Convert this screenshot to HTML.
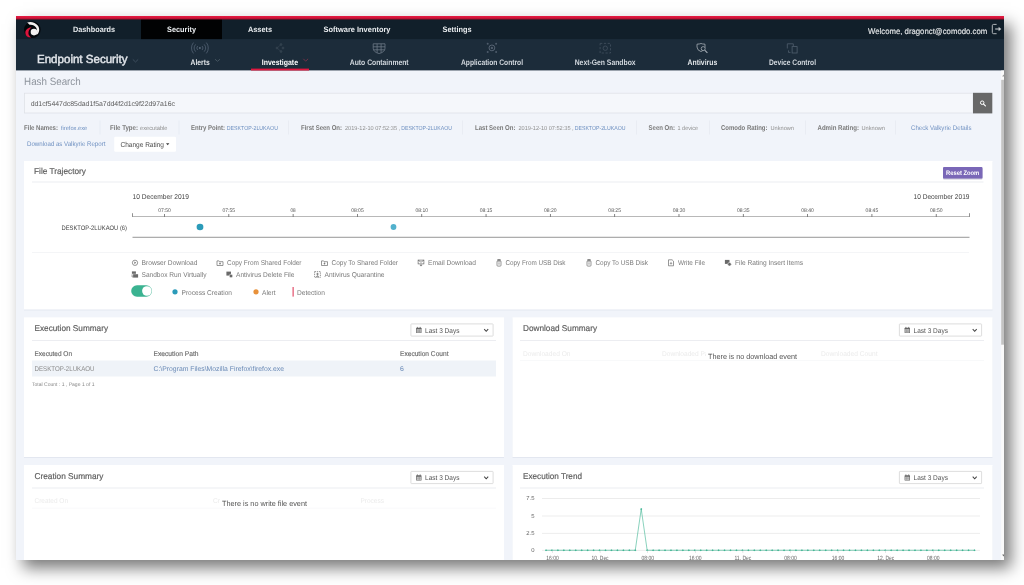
<!DOCTYPE html>
<html lang="en"><head><meta charset="utf-8"><title>Endpoint Security - Hash Search</title>
<style>
html,body{margin:0;padding:0;background:#fff;}
body{width:1024px;height:585px;overflow:hidden;position:relative;font-family:"Liberation Sans",sans-serif;}
#frame{position:absolute;left:16px;top:16px;width:988px;height:544px;overflow:hidden;background:#f1f4fa;box-shadow:7px 8px 15px rgba(0,0,0,.53);}
#ui{position:absolute;left:-16px;top:-16px;font-family:"Liberation Sans",sans-serif;text-rendering:geometricPrecision;will-change:transform;}
#ui text{white-space:pre;}
</style></head>
<body>
<div id="frame">
<svg id="ui" width="1024" height="585" viewBox="0 0 1024 585">
<defs><linearGradient id="rg" x1="0" y1="0" x2="0" y2="1"><stop offset="0" stop-color="#e81c42"/><stop offset="0.55" stop-color="#d2153b"/><stop offset="1" stop-color="#980e2a"/></linearGradient></defs>
<rect x="16.00" y="16.00" width="989.00" height="54.40" fill="#1c2c3a"/>
<rect x="16.00" y="16.00" width="989.00" height="23.10" fill="#111f2a"/>
<rect x="141.00" y="16.00" width="81.00" height="23.10" fill="#010203"/>
<rect x="16.00" y="15.90" width="989.00" height="3.60" fill="url(#rg)"/>
<circle cx="32.3" cy="29.8" r="8.3" fill="#03060a"/><path d="M27.2 22.4 C30.5 21.2 35.5 22 38 25.8 C40.2 29.4 39.2 33.4 36.4 35.1 C37.4 32.6 37.4 30 36.2 27.8 C34.8 25.4 32 24.3 29.6 24.8 Z" fill="#f3f0f0"/><circle cx="34" cy="32.1" r="3.3" fill="#f3f0f0"/><path d="M31.6 27.6 C28 27.4 25 30 25.4 33.4 C25.8 36 28.4 37.8 31 37.4 C28.8 36 28 33.8 28.6 31.6 C29 29.8 30.2 28.4 31.6 27.6 Z" fill="#d9143c"/>
<text y="32" font-size="7.8" fill="#e9ecef" font-weight="700" x="73.00" textLength="42.00" lengthAdjust="spacingAndGlyphs">Dashboards</text>
<text y="32" font-size="7.8" fill="#e9ecef" font-weight="700" x="167.00" textLength="29.00" lengthAdjust="spacingAndGlyphs">Security</text>
<text y="32" font-size="7.8" fill="#e9ecef" font-weight="700" x="248.00" textLength="24.00" lengthAdjust="spacingAndGlyphs">Assets</text>
<text y="32" font-size="7.8" fill="#e9ecef" font-weight="700" x="323.50" textLength="67.00" lengthAdjust="spacingAndGlyphs">Software Inventory</text>
<text y="32" font-size="7.8" fill="#e9ecef" font-weight="700" x="442.50" textLength="29.00" lengthAdjust="spacingAndGlyphs">Settings</text>
<text y="34" font-size="8.2" fill="#e6e8ea" stroke="#e6e8ea" stroke-width="0.12" x="868.00" textLength="119.20" lengthAdjust="spacingAndGlyphs">Welcome, dragonct@comodo.com</text>
<g transform="translate(991.00 23.50)"><path d="M5.6 0.9 H2.6 Q1.3 0.9 1.3 2.2 V8.9 Q1.3 10.2 2.6 10.2 H5.6" fill="none" stroke="#c3c7cb" stroke-width="0.9"/><path d="M4.2 5.5 H8.2" stroke="#c3c7cb" stroke-width="1.1" fill="none"/><path d="M7.6 3.2 L10.3 5.5 L7.6 7.8 Z" fill="#c3c7cb"/></g>
<text y="63" font-size="11.7" fill="#e1e5ea" stroke="#e1e5ea" stroke-width="0.45" x="37.00" textLength="90.50" lengthAdjust="spacingAndGlyphs">Endpoint Security</text>
<g transform="translate(132.00 58.40)"><path d="M0.8 1 L3.5 3.6 L6.2 1" fill="none" stroke="#415161" stroke-width="0.9"/></g>
<text y="65" font-size="8.0" fill="#e3e7ea" font-weight="700" x="190.60" textLength="19.10" lengthAdjust="spacingAndGlyphs">Alerts</text>
<text y="65" font-size="8.0" fill="#ffffff" font-weight="700" x="261.75" textLength="36.25" lengthAdjust="spacingAndGlyphs">Investigate</text>
<text y="65" font-size="8.0" fill="#d3d9df" font-weight="700" x="349.80" textLength="58.80" lengthAdjust="spacingAndGlyphs">Auto Containment</text>
<text y="65" font-size="8.0" fill="#d3d9df" font-weight="700" x="461.00" textLength="62.00" lengthAdjust="spacingAndGlyphs">Application Control</text>
<text y="65" font-size="8.0" fill="#d3d9df" font-weight="700" x="574.70" textLength="60.90" lengthAdjust="spacingAndGlyphs">Next-Gen Sandbox</text>
<text y="65" font-size="8.0" fill="#e3e7ea" font-weight="700" x="687.60" textLength="29.60" lengthAdjust="spacingAndGlyphs">Antivirus</text>
<text y="65" font-size="8.0" fill="#d3d9df" font-weight="700" x="769.00" textLength="47.00" lengthAdjust="spacingAndGlyphs">Device Control</text>
<g transform="translate(214.60 58.80)"><path d="M0.4 0.4 L2.9 2.5 L5.4 0.4" fill="none" stroke="#44545f" stroke-width="1"/></g>
<g transform="translate(302.50 58.00)"><path d="M0.8 0.8 L3.2 3.2 L5.6 0.8" fill="none" stroke="#7c3149" stroke-width="0.9"/></g>
<rect x="251.00" y="68.60" width="58.00" height="1.90" fill="#e2173f"/>
<g fill="none" stroke="#4f5f70" stroke-width="0.85"><circle cx="199.9" cy="48.0" r="1" fill="#5a6a7a" stroke="none"/><path d="M202.13 45.99 A3.0 3.0 0 0 1 202.13 50.01"/><path d="M197.67 45.99 A3.0 3.0 0 0 0 197.67 50.01"/><path d="M204.19 44.40 A5.6 5.6 0 0 1 204.19 51.60"/><path d="M195.61 44.40 A5.6 5.6 0 0 0 195.61 51.60"/><path d="M206.33 42.60 A8.4 8.4 0 0 1 206.33 53.40"/><path d="M193.47 42.60 A8.4 8.4 0 0 0 193.47 53.40"/></g>
<g transform="translate(274.00 43.00)"><g stroke="#33424f" stroke-width="0.7" fill="#33424f"><path d="M7 1.5 L3 5 L7 8.5" fill="none"/><circle cx="7" cy="1.5" r="1"/><circle cx="3" cy="5" r="1"/><circle cx="9" cy="5" r="1"/><circle cx="7" cy="8.5" r="1"/></g></g>
<g transform="translate(372.60 43.20)"><g fill="none" stroke="#6d7a88" stroke-width="0.8"><path d="M0.6 0.6 H12.4 V5 Q12.4 8.8 6.5 10.4 Q0.6 8.8 0.6 5 Z"/><path d="M4.5 0.6 V9.6 M8.5 0.6 V9.6 M0.6 3.6 H12.4 M1 6.6 H12"/></g></g>
<g transform="translate(485.50 41.50)"><g fill="#4e5c6b"><circle cx="6.4" cy="6.4" r="2.9" fill="none" stroke="#5b6978" stroke-width="0.9"/><circle cx="6.4" cy="6.4" r="1.2"/><circle cx="2.2" cy="2.2" r="1"/><circle cx="10.6" cy="2.2" r="1"/><circle cx="2.2" cy="10.6" r="1"/><circle cx="10.6" cy="10.6" r="1"/></g></g>
<g transform="translate(599.50 42.80)"><g fill="none" stroke="#425160" stroke-width="0.8"><rect x="0.6" y="0.6" width="10.4" height="9.6" stroke-dasharray="2.2 1.6"/><circle cx="5.8" cy="5.4" r="2.2"/></g></g>
<g transform="translate(696.00 43.00)"><g fill="none" stroke="#a4acb4" stroke-width="0.8"><path d="M1 1.2 Q3.8 1 5 0.5 Q6.2 1 9 1.2 V4 Q9 7.2 5 8.6 Q1 7.2 1 4 Z"/><circle cx="7.2" cy="5.6" r="2" fill="#1c2c3a"/><path d="M8.7 7.1 L11.4 9.8" stroke-width="1.1"/></g></g>
<g transform="translate(786.50 43.00)"><g fill="none" stroke="#51606f" stroke-width="0.8"><path d="M0.8 5.5 V0.8 H6.8 V3"/><rect x="5.6" y="3.6" width="5" height="6.4"/><path d="M2 7.4 V9.4 H4"/></g></g>
<text y="85" font-size="10.6" fill="#8e949d" x="24.10" textLength="56.60" lengthAdjust="spacingAndGlyphs">Hash Search</text>
<rect x="24.40" y="93.20" width="948.60" height="19.80" fill="#f5f7fb" stroke="#dfe2e8" stroke-width="0.8"/>
<rect x="973.00" y="92.80" width="19.30" height="20.60" fill="#686868"/>
<g transform="translate(979.30 99.80)"><circle cx="2.9" cy="2.9" r="1.75" fill="none" stroke="#fff" stroke-width="1"/><path d="M4.3 4.3 L6.1 6.1" stroke="#fff" stroke-width="1.2" stroke-linecap="round"/></g>
<text y="106" font-size="6.9" fill="#5a5a5a" x="30.70" textLength="144.30" lengthAdjust="spacingAndGlyphs">dd1cf5447dc85dad1f5a7dd4f2d1c9f22d97a16c</text>
<text y="130" font-size="7.0" fill="#7a7a7a" font-weight="700" x="24.00" textLength="34.00" lengthAdjust="spacingAndGlyphs">File Names:</text>
<text y="130" font-size="5.9" fill="#6d8fc0" x="60.90" textLength="26.40" lengthAdjust="spacingAndGlyphs">firefox.exe</text>
<text y="130" font-size="7.0" fill="#7a7a7a" font-weight="700" x="110.00" textLength="28.00" lengthAdjust="spacingAndGlyphs">File Type:</text>
<text y="130" font-size="5.9" fill="#8f8f8f" x="140.00" textLength="27.50" lengthAdjust="spacingAndGlyphs">executable</text>
<text y="130" font-size="7.0" fill="#7a7a7a" font-weight="700" x="191.00" textLength="34.00" lengthAdjust="spacingAndGlyphs">Entry Point:</text>
<text y="130" font-size="5.9" fill="#6d8fc0" x="226.75" textLength="51.25" lengthAdjust="spacingAndGlyphs">DESKTOP-2LUKAOU</text>
<text y="130" font-size="7.0" fill="#7a7a7a" font-weight="700" x="301.00" textLength="41.00" lengthAdjust="spacingAndGlyphs">First Seen On:</text>
<text y="130" font-size="5.9" fill="#8f8f8f" x="345.00" textLength="52.00" lengthAdjust="spacingAndGlyphs">2019-12-10 07:52:35</text>
<text y="130" font-size="5.9" fill="#8f8f8f" x="398.60">,</text>
<text y="130" font-size="5.9" fill="#6d8fc0" x="401.30" textLength="50.70" lengthAdjust="spacingAndGlyphs">DESKTOP-2LUKAOU</text>
<text y="130" font-size="7.0" fill="#7a7a7a" font-weight="700" x="475.00" textLength="40.50" lengthAdjust="spacingAndGlyphs">Last Seen On:</text>
<text y="130" font-size="5.9" fill="#8f8f8f" x="518.50" textLength="52.00" lengthAdjust="spacingAndGlyphs">2019-12-10 07:52:35</text>
<text y="130" font-size="5.9" fill="#8f8f8f" x="572.00">,</text>
<text y="130" font-size="5.9" fill="#6d8fc0" x="574.70" textLength="50.80" lengthAdjust="spacingAndGlyphs">DESKTOP-2LUKAOU</text>
<text y="130" font-size="7.0" fill="#7a7a7a" font-weight="700" x="648.50" textLength="26.50" lengthAdjust="spacingAndGlyphs">Seen On:</text>
<text y="130" font-size="5.9" fill="#8f8f8f" x="677.50" textLength="20.50" lengthAdjust="spacingAndGlyphs">1 device</text>
<text y="130" font-size="7.0" fill="#7a7a7a" font-weight="700" x="721.00" textLength="46.50" lengthAdjust="spacingAndGlyphs">Comodo Rating:</text>
<text y="130" font-size="5.9" fill="#8f8f8f" x="770.50" textLength="23.50" lengthAdjust="spacingAndGlyphs">Unknown</text>
<text y="130" font-size="7.0" fill="#7a7a7a" font-weight="700" x="817.50" textLength="41.50" lengthAdjust="spacingAndGlyphs">Admin Rating:</text>
<text y="130" font-size="5.9" fill="#8f8f8f" x="861.50" textLength="23.50" lengthAdjust="spacingAndGlyphs">Unknown</text>
<text y="130" font-size="6.7" fill="#6d8fc0" x="911.00" textLength="60.50" lengthAdjust="spacingAndGlyphs">Check Valkyrie Details</text>
<rect x="99.60" y="120.50" width="0.80" height="14.00" fill="#e7eaf2"/>
<rect x="178.60" y="120.50" width="0.80" height="14.00" fill="#e7eaf2"/>
<rect x="288.10" y="120.50" width="0.80" height="14.00" fill="#e7eaf2"/>
<rect x="462.10" y="120.50" width="0.80" height="14.00" fill="#e7eaf2"/>
<rect x="636.10" y="120.50" width="0.80" height="14.00" fill="#e7eaf2"/>
<rect x="709.10" y="120.50" width="0.80" height="14.00" fill="#e7eaf2"/>
<rect x="805.10" y="120.50" width="0.80" height="14.00" fill="#e7eaf2"/>
<rect x="895.10" y="120.50" width="0.80" height="14.00" fill="#e7eaf2"/>
<text y="146" font-size="6.7" fill="#6d8fc0" x="27.00" textLength="78.40" lengthAdjust="spacingAndGlyphs">Download as Valkyrie Report</text>
<rect x="114.20" y="136.80" width="61.80" height="14.90" fill="#ffffff" rx="1.2"/>
<text y="147" font-size="7.1" fill="#4a4a4a" x="120.50" textLength="43.50" lengthAdjust="spacingAndGlyphs">Change Rating</text>
<g transform="translate(165.80 143.00)"><path d="M0.2 0.3 H3.6 L1.9 2.3 Z" fill="#3a3a3a"/></g>
<rect x="1001.20" y="70.50" width="3.80" height="489.50" fill="#fafafa"/>
<rect x="1001.20" y="79.80" width="3.80" height="264.90" fill="#c3c3c3"/>
<path d="M1002.2 554.6 H1004.8 L1003.5 556.6 Z" fill="#6a6a6a"/>
<path d="M1002.2 76.4 H1004.8 L1003.5 74.4 Z" fill="#9a9a9a"/>
<rect x="24.00" y="162.00" width="968.50" height="148.50" rx="0" fill="#e3e7f0"/>
<rect x="24.00" y="161.00" width="968.50" height="148.50" fill="#ffffff"/>
<text y="174" font-size="8.5" fill="#5e5e5e" stroke="#5e5e5e" stroke-width="0.18" x="34.00" textLength="52.00" lengthAdjust="spacingAndGlyphs">File Trajectory</text>
<rect x="943.00" y="168.00" width="39.50" height="11.50" rx="1" fill="#c9c6d6"/>
<rect x="943.00" y="167.00" width="39.50" height="11.50" fill="#7a67b7" rx="1"/>
<text y="175" font-size="6.5" fill="#ffffff" font-weight="700" x="946.00" textLength="33.25" lengthAdjust="spacingAndGlyphs">Reset Zoom</text>
<rect x="32.00" y="181.60" width="951.50" height="0.80" fill="#e7e9ee"/>
<text y="199" font-size="7.0" fill="#444" x="132.50" textLength="56.50" lengthAdjust="spacingAndGlyphs">10 December 2019</text>
<text y="199" font-size="7.0" fill="#444" x="913.50" textLength="56.00" lengthAdjust="spacingAndGlyphs">10 December 2019</text>
<rect x="132.50" y="216.10" width="837.00" height="0.80" fill="#a6a6a6"/>
<rect x="132.10" y="213.20" width="0.80" height="3.70" fill="#777"/>
<rect x="969.10" y="213.20" width="0.80" height="3.70" fill="#777"/>
<rect x="164.10" y="214.00" width="0.80" height="2.90" fill="#666"/>
<text y="212" font-size="5.4" fill="#555" x="158.20" textLength="12.60" lengthAdjust="spacingAndGlyphs">07:50</text>
<rect x="228.41" y="214.00" width="0.80" height="2.90" fill="#666"/>
<text y="212" font-size="5.4" fill="#555" x="222.51" textLength="12.60" lengthAdjust="spacingAndGlyphs">07:55</text>
<rect x="292.72" y="214.00" width="0.80" height="2.90" fill="#666"/>
<text y="212" font-size="5.4" fill="#555" x="290.52" textLength="5.20" lengthAdjust="spacingAndGlyphs">08</text>
<rect x="357.03" y="214.00" width="0.80" height="2.90" fill="#666"/>
<text y="212" font-size="5.4" fill="#555" x="351.13" textLength="12.60" lengthAdjust="spacingAndGlyphs">08:05</text>
<rect x="421.34" y="214.00" width="0.80" height="2.90" fill="#666"/>
<text y="212" font-size="5.4" fill="#555" x="415.44" textLength="12.60" lengthAdjust="spacingAndGlyphs">08:10</text>
<rect x="485.65" y="214.00" width="0.80" height="2.90" fill="#666"/>
<text y="212" font-size="5.4" fill="#555" x="479.75" textLength="12.60" lengthAdjust="spacingAndGlyphs">08:15</text>
<rect x="549.96" y="214.00" width="0.80" height="2.90" fill="#666"/>
<text y="212" font-size="5.4" fill="#555" x="544.06" textLength="12.60" lengthAdjust="spacingAndGlyphs">08:20</text>
<rect x="614.27" y="214.00" width="0.80" height="2.90" fill="#666"/>
<text y="212" font-size="5.4" fill="#555" x="608.37" textLength="12.60" lengthAdjust="spacingAndGlyphs">08:25</text>
<rect x="678.58" y="214.00" width="0.80" height="2.90" fill="#666"/>
<text y="212" font-size="5.4" fill="#555" x="672.68" textLength="12.60" lengthAdjust="spacingAndGlyphs">08:30</text>
<rect x="742.89" y="214.00" width="0.80" height="2.90" fill="#666"/>
<text y="212" font-size="5.4" fill="#555" x="736.99" textLength="12.60" lengthAdjust="spacingAndGlyphs">08:35</text>
<rect x="807.20" y="214.00" width="0.80" height="2.90" fill="#666"/>
<text y="212" font-size="5.4" fill="#555" x="801.30" textLength="12.60" lengthAdjust="spacingAndGlyphs">08:40</text>
<rect x="871.51" y="214.00" width="0.80" height="2.90" fill="#666"/>
<text y="212" font-size="5.4" fill="#555" x="865.61" textLength="12.60" lengthAdjust="spacingAndGlyphs">08:45</text>
<rect x="935.82" y="214.00" width="0.80" height="2.90" fill="#666"/>
<text y="212" font-size="5.4" fill="#555" x="929.92" textLength="12.60" lengthAdjust="spacingAndGlyphs">08:50</text>
<text y="230" font-size="6.4" fill="#444" x="61.50" textLength="65.50" lengthAdjust="spacingAndGlyphs">DESKTOP-2LUKAOU (6)</text>
<ellipse cx="200" cy="227" rx="3.4" ry="3.2" fill="#2b9bb9"/>
<circle cx="393.50" cy="227.00" r="2.90" fill="#52b1cd" />
<rect x="132.50" y="236.80" width="837.00" height="0.90" fill="#8a8a8a"/>
<rect x="32.00" y="252.20" width="937.00" height="0.70" fill="#eff1f4"/>
<g transform="translate(131.50 259.30)"><circle cx="3.5" cy="3.5" r="2.65" stroke="#6a6a6a" stroke-width="0.7" fill="none"/><path d="M2.9 2.3 L4.7 3.5 L2.9 4.7 Z" fill="#6a6a6a"/></g>
<text y="265" font-size="7.0" fill="#7a7a7a" x="141.50" textLength="56.00" lengthAdjust="spacingAndGlyphs">Browser Download</text>
<g transform="translate(216.50 259.30)"><path d="M0.5 1.6 H2.6 L3.2 2.4 H6.5 V6.2 H0.5 Z" stroke="#6a6a6a" stroke-width="0.7" fill="none"/><path d="M3.5 3.2 V5.2 M2.6 4.3 H4.4" stroke="#6a6a6a" stroke-width="0.7" fill="none"/></g>
<text y="265" font-size="7.0" fill="#7a7a7a" x="227.00" textLength="74.50" lengthAdjust="spacingAndGlyphs">Copy From Shared Folder</text>
<g transform="translate(321.00 259.30)"><path d="M0.5 1.6 H2.6 L3.2 2.4 H6.5 V6.2 H0.5 Z" stroke="#6a6a6a" stroke-width="0.7" fill="none"/><path d="M3.5 3.2 V5.2 M2.6 4.3 H4.4" stroke="#6a6a6a" stroke-width="0.7" fill="none"/></g>
<text y="265" font-size="7.0" fill="#7a7a7a" x="331.50" textLength="66.50" lengthAdjust="spacingAndGlyphs">Copy To Shared Folder</text>
<g transform="translate(417.50 259.30)"><rect x="0.6" y="0.8" width="5.8" height="3.8" stroke="#6a6a6a" stroke-width="0.7" fill="none"/><path d="M0.6 0.8 L3.5 3 L6.4 0.8" stroke="#6a6a6a" stroke-width="0.7" fill="none"/><path d="M3.5 4.6 V6.6 M2.3 5.6 L3.5 6.8 L4.7 5.6" stroke="#6a6a6a" stroke-width="0.7" fill="none"/></g>
<text y="265" font-size="7.0" fill="#7a7a7a" x="428.00" textLength="48.00" lengthAdjust="spacingAndGlyphs">Email Download</text>
<g transform="translate(495.50 259.30)"><rect x="1.5" y="1.6" width="4" height="5.2" rx="0.8" stroke="#6a6a6a" stroke-width="0.7" fill="none"/><rect x="2.4" y="0.2" width="2.2" height="1.4" stroke="#6a6a6a" stroke-width="0.7" fill="none"/><path d="M3.5 3 V5.4" stroke="#6a6a6a" stroke-width="0.7" fill="none"/></g>
<text y="265" font-size="7.0" fill="#7a7a7a" x="505.50" textLength="60.00" lengthAdjust="spacingAndGlyphs">Copy From USB Disk</text>
<g transform="translate(585.50 259.30)"><rect x="1.5" y="1.6" width="4" height="5.2" rx="0.8" stroke="#6a6a6a" stroke-width="0.7" fill="none"/><rect x="2.4" y="0.2" width="2.2" height="1.4" stroke="#6a6a6a" stroke-width="0.7" fill="none"/><path d="M3.5 3 V5.4" stroke="#6a6a6a" stroke-width="0.7" fill="none"/></g>
<text y="265" font-size="7.0" fill="#7a7a7a" x="595.50" textLength="52.50" lengthAdjust="spacingAndGlyphs">Copy To USB Disk</text>
<g transform="translate(667.50 259.30)"><path d="M1 0.5 H4.6 L6 1.9 V6.5 H1 Z" stroke="#6a6a6a" stroke-width="0.7" fill="none"/><path d="M3.5 2.6 V4.8 M2.5 3.9 L3.5 4.9 L4.5 3.9" stroke="#6a6a6a" stroke-width="0.7" fill="none"/></g>
<text y="265" font-size="7.0" fill="#7a7a7a" x="678.00" textLength="27.00" lengthAdjust="spacingAndGlyphs">Write File</text>
<g transform="translate(724.50 259.30)"><rect x="0.4" y="0.6" width="4.6" height="4" fill="#6a6a6a"/><circle cx="5" cy="5" r="1.8" fill="#6a6a6a" stroke="#fff" stroke-width="0.5"/></g>
<text y="265" font-size="7.0" fill="#7a7a7a" x="735.00" textLength="68.00" lengthAdjust="spacingAndGlyphs">File Rating Insert Items</text>
<g transform="translate(131.50 271.00)"><rect x="0.4" y="0.4" width="4" height="2.4" fill="#6a6a6a"/><rect x="1.6" y="3.2" width="5" height="3.4" fill="#6a6a6a"/><path d="M0.6 3.4 V6 H1.4" stroke="#6a6a6a" stroke-width="0.7" fill="none"/></g>
<text y="277" font-size="7.0" fill="#7a7a7a" x="141.50" textLength="65.00" lengthAdjust="spacingAndGlyphs">Sandbox Run Virtually</text>
<g transform="translate(226.00 271.00)"><rect x="0.4" y="0.6" width="4.6" height="4" fill="#6a6a6a"/><circle cx="5" cy="5" r="1.8" fill="#6a6a6a" stroke="#fff" stroke-width="0.5"/></g>
<text y="277" font-size="7.0" fill="#7a7a7a" x="236.00" textLength="58.50" lengthAdjust="spacingAndGlyphs">Antivirus Delete File</text>
<g transform="translate(314.00 271.00)"><rect x="0.6" y="0.6" width="5.8" height="5.8" stroke="#6a6a6a" stroke-width="0.7" fill="none" stroke-dasharray="1.4 0.8"/><path d="M3.5 1.8 V4.8 M2.2 3 H4.8 M2 5.4 H5" stroke="#6a6a6a" stroke-width="0.7" fill="none"/></g>
<text y="277" font-size="7.0" fill="#7a7a7a" x="324.50" textLength="60.00" lengthAdjust="spacingAndGlyphs">Antivirus Quarantine</text>
<rect x="131.20" y="285.20" width="20.80" height="11.60" fill="#3bb391" rx="5.8"/>
<circle cx="146.90" cy="291.00" r="4.80" fill="#ffffff" />
<circle cx="175.00" cy="291.80" r="2.60" fill="#2b9bb9" />
<text y="295" font-size="7.0" fill="#7a7a7a" x="181.50" textLength="50.50" lengthAdjust="spacingAndGlyphs">Process Creation</text>
<circle cx="256.00" cy="291.80" r="2.60" fill="#e8913a" />
<text y="295" font-size="7.0" fill="#7a7a7a" x="262.00" textLength="13.50" lengthAdjust="spacingAndGlyphs">Alert</text>
<rect x="292.60" y="287.00" width="1.00" height="9.60" fill="#dc2d4f"/>
<text y="295" font-size="7.0" fill="#7a7a7a" x="297.00" textLength="28.00" lengthAdjust="spacingAndGlyphs">Detection</text>
<rect x="24.00" y="318.40" width="480.00" height="139.60" rx="0" fill="#e3e7f0"/>
<rect x="24.00" y="317.40" width="480.00" height="139.60" fill="#ffffff"/>
<text y="331" font-size="8.5" fill="#5e5e5e" stroke="#5e5e5e" stroke-width="0.18" x="34.50" textLength="73.50" lengthAdjust="spacingAndGlyphs">Execution Summary</text>
<rect x="410.90" y="323.90" width="82.20" height="12.20" fill="#ffffff" rx="0.6" stroke="#d4d4d4" stroke-width="0.8"/>
<g transform="translate(415.80 326.70)"><rect x="0.3" y="1" width="5.4" height="5.4" rx="0.5" fill="#666"/><rect x="1" y="2.6" width="4" height="3.2" fill="#fff" opacity="0.85"/><path d="M1.6 0.2 V1.6 M4.4 0.2 V1.6" stroke="#666" stroke-width="0.8"/><path d="M1 3.7 H5 M1 4.8 H5 M2.3 2.6 V5.8 M3.7 2.6 V5.8" stroke="#666" stroke-width="0.35"/></g>
<text y="333" font-size="7.0" fill="#555" x="425.00" textLength="34.50" lengthAdjust="spacingAndGlyphs">Last 3 Days</text>
<g transform="translate(483.80 328.80)"><path d="M0.4 0.4 L2.4 2.5 L4.4 0.4" fill="none" stroke="#444" stroke-width="1.05"/></g>
<rect x="32.00" y="340.10" width="464.00" height="0.80" fill="#e7e9ee"/>
<text y="356" font-size="6.9" fill="#6a6a6a" stroke="#6a6a6a" stroke-width="0.14" x="34.50" textLength="37.50" lengthAdjust="spacingAndGlyphs">Executed On</text>
<text y="356" font-size="6.9" fill="#6a6a6a" stroke="#6a6a6a" stroke-width="0.14" x="153.50" textLength="45.00" lengthAdjust="spacingAndGlyphs">Execution Path</text>
<text y="356" font-size="6.9" fill="#6a6a6a" stroke="#6a6a6a" stroke-width="0.14" x="400.00" textLength="48.50" lengthAdjust="spacingAndGlyphs">Execution Count</text>
<rect x="32.00" y="360.50" width="464.00" height="16.00" fill="#eff3f8"/>
<text y="371" font-size="6.9" fill="#8a8a8a" x="34.50" textLength="60.00" lengthAdjust="spacingAndGlyphs">DESKTOP-2LUKAOU</text>
<text y="371" font-size="6.9" fill="#6a8ab6" x="153.50" textLength="130.50" lengthAdjust="spacingAndGlyphs">C:\Program Files\Mozilla Firefox\firefox.exe</text>
<text y="371" font-size="6.9" fill="#6a8ab6" x="400.00">6</text>
<text y="386" font-size="5.2" fill="#8a8a8a" x="32.00" textLength="62.50" lengthAdjust="spacingAndGlyphs">Total Count : 1 , Page 1 of 1</text>
<rect x="512.50" y="318.40" width="480.00" height="139.60" rx="0" fill="#e3e7f0"/>
<rect x="512.50" y="317.40" width="480.00" height="139.60" fill="#ffffff"/>
<text y="331" font-size="8.5" fill="#5e5e5e" stroke="#5e5e5e" stroke-width="0.18" x="523.00" textLength="74.00" lengthAdjust="spacingAndGlyphs">Download Summary</text>
<rect x="899.40" y="323.90" width="82.20" height="12.20" fill="#ffffff" rx="0.6" stroke="#d4d4d4" stroke-width="0.8"/>
<g transform="translate(904.30 326.70)"><rect x="0.3" y="1" width="5.4" height="5.4" rx="0.5" fill="#666"/><rect x="1" y="2.6" width="4" height="3.2" fill="#fff" opacity="0.85"/><path d="M1.6 0.2 V1.6 M4.4 0.2 V1.6" stroke="#666" stroke-width="0.8"/><path d="M1 3.7 H5 M1 4.8 H5 M2.3 2.6 V5.8 M3.7 2.6 V5.8" stroke="#666" stroke-width="0.35"/></g>
<text y="333" font-size="7.0" fill="#555" x="913.50" textLength="34.50" lengthAdjust="spacingAndGlyphs">Last 3 Days</text>
<g transform="translate(972.30 328.80)"><path d="M0.4 0.4 L2.4 2.5 L4.4 0.4" fill="none" stroke="#444" stroke-width="1.05"/></g>
<rect x="520.00" y="340.10" width="464.00" height="0.80" fill="#e7e9ee"/>
<text y="356" font-size="6.9" fill="#ebebeb" x="523.00" textLength="47.50" lengthAdjust="spacingAndGlyphs">Downloaded On</text>
<text y="356" font-size="6.9" fill="#ebebeb" x="662.00" textLength="52.00" lengthAdjust="spacingAndGlyphs">Downloaded Path</text>
<text y="356" font-size="6.9" fill="#ebebeb" x="821.00" textLength="56.50" lengthAdjust="spacingAndGlyphs">Downloaded Count</text>
<rect x="520.00" y="360.30" width="464.00" height="0.60" fill="#f4f5f7"/>
<rect x="706.00" y="350.00" width="93.00" height="10.00" fill="#ffffff"/>
<text y="359" font-size="7.5" fill="#555" x="708.00" textLength="89.00" lengthAdjust="spacingAndGlyphs">There is no download event</text>
<rect x="24.00" y="466.00" width="480.00" height="135.00" rx="0" fill="#e3e7f0"/>
<rect x="24.00" y="465.00" width="480.00" height="135.00" fill="#ffffff"/>
<text y="479" font-size="8.5" fill="#5e5e5e" stroke="#5e5e5e" stroke-width="0.18" x="34.50" textLength="69.00" lengthAdjust="spacingAndGlyphs">Creation Summary</text>
<rect x="410.90" y="471.40" width="82.20" height="12.20" fill="#ffffff" rx="0.6" stroke="#d4d4d4" stroke-width="0.8"/>
<g transform="translate(415.80 474.20)"><rect x="0.3" y="1" width="5.4" height="5.4" rx="0.5" fill="#666"/><rect x="1" y="2.6" width="4" height="3.2" fill="#fff" opacity="0.85"/><path d="M1.6 0.2 V1.6 M4.4 0.2 V1.6" stroke="#666" stroke-width="0.8"/><path d="M1 3.7 H5 M1 4.8 H5 M2.3 2.6 V5.8 M3.7 2.6 V5.8" stroke="#666" stroke-width="0.35"/></g>
<text y="480" font-size="7.0" fill="#555" x="425.00" textLength="34.50" lengthAdjust="spacingAndGlyphs">Last 3 Days</text>
<g transform="translate(483.80 476.30)"><path d="M0.4 0.4 L2.4 2.5 L4.4 0.4" fill="none" stroke="#444" stroke-width="1.05"/></g>
<rect x="32.00" y="487.60" width="464.00" height="0.80" fill="#e7e9ee"/>
<text y="503" font-size="6.9" fill="#ebebeb" x="34.50" textLength="33.50" lengthAdjust="spacingAndGlyphs">Created On</text>
<text y="503" font-size="6.9" fill="#ebebeb" x="213.00" textLength="39.00" lengthAdjust="spacingAndGlyphs">Created Path</text>
<text y="503" font-size="6.9" fill="#ebebeb" x="360.50" textLength="23.50" lengthAdjust="spacingAndGlyphs">Process</text>
<rect x="32.00" y="507.80" width="464.00" height="0.60" fill="#f4f5f7"/>
<rect x="220.00" y="497.50" width="89.00" height="10.00" fill="#ffffff"/>
<text y="506" font-size="7.5" fill="#555" x="222.00" textLength="85.00" lengthAdjust="spacingAndGlyphs">There is no write file event</text>
<rect x="512.50" y="466.00" width="480.00" height="135.00" rx="0" fill="#e3e7f0"/>
<rect x="512.50" y="465.00" width="480.00" height="135.00" fill="#ffffff"/>
<text y="479" font-size="8.5" fill="#5e5e5e" stroke="#5e5e5e" stroke-width="0.18" x="523.00" textLength="59.00" lengthAdjust="spacingAndGlyphs">Execution Trend</text>
<rect x="899.40" y="471.40" width="82.20" height="12.20" fill="#ffffff" rx="0.6" stroke="#d4d4d4" stroke-width="0.8"/>
<g transform="translate(904.30 474.20)"><rect x="0.3" y="1" width="5.4" height="5.4" rx="0.5" fill="#666"/><rect x="1" y="2.6" width="4" height="3.2" fill="#fff" opacity="0.85"/><path d="M1.6 0.2 V1.6 M4.4 0.2 V1.6" stroke="#666" stroke-width="0.8"/><path d="M1 3.7 H5 M1 4.8 H5 M2.3 2.6 V5.8 M3.7 2.6 V5.8" stroke="#666" stroke-width="0.35"/></g>
<text y="480" font-size="7.0" fill="#555" x="913.50" textLength="34.50" lengthAdjust="spacingAndGlyphs">Last 3 Days</text>
<g transform="translate(972.30 476.30)"><path d="M0.4 0.4 L2.4 2.5 L4.4 0.4" fill="none" stroke="#444" stroke-width="1.05"/></g>
<rect x="520.00" y="487.60" width="464.00" height="0.80" fill="#e7e9ee"/>
<rect x="542.00" y="498.15" width="438.00" height="0.70" fill="#e4e4e4"/>
<rect x="542.00" y="515.65" width="438.00" height="0.70" fill="#e4e4e4"/>
<rect x="542.00" y="532.90" width="438.00" height="0.70" fill="#e4e4e4"/>
<rect x="542.00" y="549.90" width="438.00" height="0.70" fill="#e4e4e4"/>
<text y="500" font-size="5.9" fill="#666" x="534.50" text-anchor="end">7.5</text>
<text y="518" font-size="5.9" fill="#666" x="534.50" text-anchor="end">5</text>
<text y="535" font-size="5.9" fill="#666" x="534.50" text-anchor="end">2.5</text>
<text y="552" font-size="5.9" fill="#666" x="534.50" text-anchor="end">0</text>
<polyline points="546.00,550.25 551.95,550.25 557.90,550.25 563.85,550.25 569.81,550.25 575.76,550.25 581.71,550.25 587.66,550.25 593.61,550.25 599.56,550.25 605.51,550.25 611.47,550.25 617.42,550.25 623.37,550.25 629.32,550.25 635.27,550.25 641.22,509.00 647.17,550.25 653.12,550.25 659.08,550.25 665.03,550.25 670.98,550.25 676.93,550.25 682.88,550.25 688.83,550.25 694.78,550.25 700.74,550.25 706.69,550.25 712.64,550.25 718.59,550.25 724.54,550.25 730.49,550.25 736.44,550.25 742.40,550.25 748.35,550.25 754.30,550.25 760.25,550.25 766.20,550.25 772.15,550.25 778.10,550.25 784.06,550.25 790.01,550.25 795.96,550.25 801.91,550.25 807.86,550.25 813.81,550.25 819.76,550.25 825.72,550.25 831.67,550.25 837.62,550.25 843.57,550.25 849.52,550.25 855.47,550.25 861.42,550.25 867.38,550.25 873.33,550.25 879.28,550.25 885.23,550.25 891.18,550.25 897.13,550.25 903.08,550.25 909.03,550.25 914.99,550.25 920.94,550.25 926.89,550.25 932.84,550.25 938.79,550.25 944.74,550.25 950.69,550.25 956.65,550.25 962.60,550.25 968.55,550.25 974.50,550.25" fill="none" stroke="#3bb391" stroke-width="0.6"/><g fill="#3bb391"><path d="M546.00 549.15 L547.10 550.25 L546.00 551.35 L544.90 550.25 Z"/><path d="M551.95 549.15 L553.05 550.25 L551.95 551.35 L550.85 550.25 Z"/><path d="M557.90 549.15 L559.00 550.25 L557.90 551.35 L556.80 550.25 Z"/><path d="M563.85 549.15 L564.95 550.25 L563.85 551.35 L562.75 550.25 Z"/><path d="M569.81 549.15 L570.91 550.25 L569.81 551.35 L568.71 550.25 Z"/><path d="M575.76 549.15 L576.86 550.25 L575.76 551.35 L574.66 550.25 Z"/><path d="M581.71 549.15 L582.81 550.25 L581.71 551.35 L580.61 550.25 Z"/><path d="M587.66 549.15 L588.76 550.25 L587.66 551.35 L586.56 550.25 Z"/><path d="M593.61 549.15 L594.71 550.25 L593.61 551.35 L592.51 550.25 Z"/><path d="M599.56 549.15 L600.66 550.25 L599.56 551.35 L598.46 550.25 Z"/><path d="M605.51 549.15 L606.61 550.25 L605.51 551.35 L604.41 550.25 Z"/><path d="M611.47 549.15 L612.57 550.25 L611.47 551.35 L610.37 550.25 Z"/><path d="M617.42 549.15 L618.52 550.25 L617.42 551.35 L616.32 550.25 Z"/><path d="M623.37 549.15 L624.47 550.25 L623.37 551.35 L622.27 550.25 Z"/><path d="M629.32 549.15 L630.42 550.25 L629.32 551.35 L628.22 550.25 Z"/><path d="M635.27 549.15 L636.37 550.25 L635.27 551.35 L634.17 550.25 Z"/><path d="M641.22 507.90 L642.32 509.00 L641.22 510.10 L640.12 509.00 Z"/><path d="M647.17 549.15 L648.27 550.25 L647.17 551.35 L646.07 550.25 Z"/><path d="M653.12 549.15 L654.23 550.25 L653.12 551.35 L652.02 550.25 Z"/><path d="M659.08 549.15 L660.18 550.25 L659.08 551.35 L657.98 550.25 Z"/><path d="M665.03 549.15 L666.13 550.25 L665.03 551.35 L663.93 550.25 Z"/><path d="M670.98 549.15 L672.08 550.25 L670.98 551.35 L669.88 550.25 Z"/><path d="M676.93 549.15 L678.03 550.25 L676.93 551.35 L675.83 550.25 Z"/><path d="M682.88 549.15 L683.98 550.25 L682.88 551.35 L681.78 550.25 Z"/><path d="M688.83 549.15 L689.93 550.25 L688.83 551.35 L687.73 550.25 Z"/><path d="M694.78 549.15 L695.88 550.25 L694.78 551.35 L693.68 550.25 Z"/><path d="M700.74 549.15 L701.84 550.25 L700.74 551.35 L699.64 550.25 Z"/><path d="M706.69 549.15 L707.79 550.25 L706.69 551.35 L705.59 550.25 Z"/><path d="M712.64 549.15 L713.74 550.25 L712.64 551.35 L711.54 550.25 Z"/><path d="M718.59 549.15 L719.69 550.25 L718.59 551.35 L717.49 550.25 Z"/><path d="M724.54 549.15 L725.64 550.25 L724.54 551.35 L723.44 550.25 Z"/><path d="M730.49 549.15 L731.59 550.25 L730.49 551.35 L729.39 550.25 Z"/><path d="M736.44 549.15 L737.54 550.25 L736.44 551.35 L735.34 550.25 Z"/><path d="M742.40 549.15 L743.50 550.25 L742.40 551.35 L741.30 550.25 Z"/><path d="M748.35 549.15 L749.45 550.25 L748.35 551.35 L747.25 550.25 Z"/><path d="M754.30 549.15 L755.40 550.25 L754.30 551.35 L753.20 550.25 Z"/><path d="M760.25 549.15 L761.35 550.25 L760.25 551.35 L759.15 550.25 Z"/><path d="M766.20 549.15 L767.30 550.25 L766.20 551.35 L765.10 550.25 Z"/><path d="M772.15 549.15 L773.25 550.25 L772.15 551.35 L771.05 550.25 Z"/><path d="M778.10 549.15 L779.20 550.25 L778.10 551.35 L777.00 550.25 Z"/><path d="M784.06 549.15 L785.16 550.25 L784.06 551.35 L782.96 550.25 Z"/><path d="M790.01 549.15 L791.11 550.25 L790.01 551.35 L788.91 550.25 Z"/><path d="M795.96 549.15 L797.06 550.25 L795.96 551.35 L794.86 550.25 Z"/><path d="M801.91 549.15 L803.01 550.25 L801.91 551.35 L800.81 550.25 Z"/><path d="M807.86 549.15 L808.96 550.25 L807.86 551.35 L806.76 550.25 Z"/><path d="M813.81 549.15 L814.91 550.25 L813.81 551.35 L812.71 550.25 Z"/><path d="M819.76 549.15 L820.86 550.25 L819.76 551.35 L818.66 550.25 Z"/><path d="M825.72 549.15 L826.82 550.25 L825.72 551.35 L824.62 550.25 Z"/><path d="M831.67 549.15 L832.77 550.25 L831.67 551.35 L830.57 550.25 Z"/><path d="M837.62 549.15 L838.72 550.25 L837.62 551.35 L836.52 550.25 Z"/><path d="M843.57 549.15 L844.67 550.25 L843.57 551.35 L842.47 550.25 Z"/><path d="M849.52 549.15 L850.62 550.25 L849.52 551.35 L848.42 550.25 Z"/><path d="M855.47 549.15 L856.57 550.25 L855.47 551.35 L854.37 550.25 Z"/><path d="M861.42 549.15 L862.52 550.25 L861.42 551.35 L860.32 550.25 Z"/><path d="M867.38 549.15 L868.48 550.25 L867.38 551.35 L866.27 550.25 Z"/><path d="M873.33 549.15 L874.43 550.25 L873.33 551.35 L872.23 550.25 Z"/><path d="M879.28 549.15 L880.38 550.25 L879.28 551.35 L878.18 550.25 Z"/><path d="M885.23 549.15 L886.33 550.25 L885.23 551.35 L884.13 550.25 Z"/><path d="M891.18 549.15 L892.28 550.25 L891.18 551.35 L890.08 550.25 Z"/><path d="M897.13 549.15 L898.23 550.25 L897.13 551.35 L896.03 550.25 Z"/><path d="M903.08 549.15 L904.18 550.25 L903.08 551.35 L901.98 550.25 Z"/><path d="M909.03 549.15 L910.13 550.25 L909.03 551.35 L907.93 550.25 Z"/><path d="M914.99 549.15 L916.09 550.25 L914.99 551.35 L913.89 550.25 Z"/><path d="M920.94 549.15 L922.04 550.25 L920.94 551.35 L919.84 550.25 Z"/><path d="M926.89 549.15 L927.99 550.25 L926.89 551.35 L925.79 550.25 Z"/><path d="M932.84 549.15 L933.94 550.25 L932.84 551.35 L931.74 550.25 Z"/><path d="M938.79 549.15 L939.89 550.25 L938.79 551.35 L937.69 550.25 Z"/><path d="M944.74 549.15 L945.84 550.25 L944.74 551.35 L943.64 550.25 Z"/><path d="M950.69 549.15 L951.79 550.25 L950.69 551.35 L949.59 550.25 Z"/><path d="M956.65 549.15 L957.75 550.25 L956.65 551.35 L955.55 550.25 Z"/><path d="M962.60 549.15 L963.70 550.25 L962.60 551.35 L961.50 550.25 Z"/><path d="M968.55 549.15 L969.65 550.25 L968.55 551.35 L967.45 550.25 Z"/><path d="M974.50 549.15 L975.60 550.25 L974.50 551.35 L973.40 550.25 Z"/></g>
<text y="560" font-size="6.1" fill="#666" x="546.25" textLength="12.50" lengthAdjust="spacingAndGlyphs">16:00</text>
<rect x="552.20" y="550.60" width="0.60" height="2.40" fill="#d8d8d8"/>
<text y="560" font-size="6.1" fill="#666" x="591.60" textLength="17.00" lengthAdjust="spacingAndGlyphs">10. Dec</text>
<rect x="599.80" y="550.60" width="0.60" height="2.40" fill="#d8d8d8"/>
<text y="560" font-size="6.1" fill="#666" x="641.45" textLength="12.50" lengthAdjust="spacingAndGlyphs">08:00</text>
<rect x="647.40" y="550.60" width="0.60" height="2.40" fill="#d8d8d8"/>
<text y="560" font-size="6.1" fill="#666" x="689.05" textLength="12.50" lengthAdjust="spacingAndGlyphs">16:00</text>
<rect x="695.00" y="550.60" width="0.60" height="2.40" fill="#d8d8d8"/>
<text y="560" font-size="6.1" fill="#666" x="734.40" textLength="17.00" lengthAdjust="spacingAndGlyphs">11. Dec</text>
<rect x="742.60" y="550.60" width="0.60" height="2.40" fill="#d8d8d8"/>
<text y="560" font-size="6.1" fill="#666" x="784.25" textLength="12.50" lengthAdjust="spacingAndGlyphs">08:00</text>
<rect x="790.20" y="550.60" width="0.60" height="2.40" fill="#d8d8d8"/>
<text y="560" font-size="6.1" fill="#666" x="831.85" textLength="12.50" lengthAdjust="spacingAndGlyphs">16:00</text>
<rect x="837.80" y="550.60" width="0.60" height="2.40" fill="#d8d8d8"/>
<text y="560" font-size="6.1" fill="#666" x="877.20" textLength="17.00" lengthAdjust="spacingAndGlyphs">12. Dec</text>
<rect x="885.40" y="550.60" width="0.60" height="2.40" fill="#d8d8d8"/>
<text y="560" font-size="6.1" fill="#666" x="927.05" textLength="12.50" lengthAdjust="spacingAndGlyphs">08:00</text>
<rect x="933.00" y="550.60" width="0.60" height="2.40" fill="#d8d8d8"/>
</svg>
</div>
</body></html>
